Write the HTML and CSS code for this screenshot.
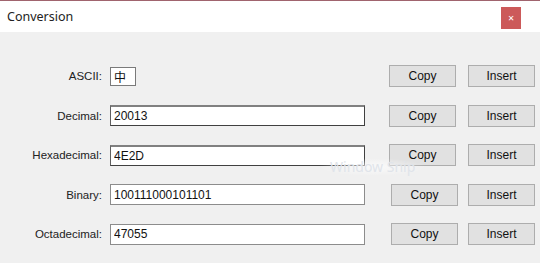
FILE: index.html
```html
<!DOCTYPE html>
<html lang="en">
<head>
  <meta charset="UTF-8" />
  <title>Conversion</title>
  <link rel="stylesheet" href="styles.css">
</head>
<body>
  <div class="window">
    <div class="titlebar">
      <span class="title">Conversion</span>
      <div class="close">&#x2715;</div>
    </div>

    <div class="content">
      <div class="row">
        <label class="label">ASCII:</label>
        <div class="field-cell"><input class="field char" value="中" readonly></div>
        <button class="btn copy">Copy</button>
        <button class="btn">Insert</button>
      </div>
      <div class="row">
        <label class="label">Decimal:</label>
        <div class="field-cell"><input class="field dark" value="20013" readonly></div>
        <button class="btn copy">Copy</button>
        <button class="btn">Insert</button>
      </div>
      <div class="row">
        <label class="label">Hexadecimal:</label>
        <div class="field-cell"><input class="field dark" value="4E2D" readonly></div>
        <button class="btn copy">Copy</button>
        <button class="btn">Insert</button>
      </div>
      <div class="row">
        <label class="label">Binary:</label>
        <div class="field-cell"><input class="field" value="100111000101101" readonly></div>
        <button class="btn copy shifted">Copy</button>
        <button class="btn">Insert</button>
      </div>
      <div class="row">
        <label class="label">Octadecimal:</label>
        <div class="field-cell"><input class="field" value="47055" readonly></div>
        <button class="btn copy shifted">Copy</button>
        <button class="btn">Insert</button>
      </div>
    </div>

    <div class="snip">Window Snip</div>
  </div>
</body>
</html>
```

FILE: styles.css
```css
body {
  margin: 0;
  background-color: #f0f0f0;
  font-family: 'Liberation Sans', Arial, sans-serif;
  color: #1a1a1a;
}

.window {
  position: relative;
  width: 540px;
  height: 263px;
  overflow: hidden;
}

.titlebar {
  display: flex;
  justify-content: space-between;
  align-items: center;
  height: 31px;
  background: #ffffff;
  border-top: 1px solid #a0646e;
  padding: 0 19px 0 7px;
}

.title {
  font-family: 'Noto Sans', sans-serif;
  font-size: 12.5px;
  color: #222;
  margin-top: -1px;
}

.close {
  width: 20px;
  height: 22px;
  background: #cc5a5a;
  color: #fff;
  font-size: 8px;
  font-family: 'DejaVu Sans', sans-serif;
  display: flex;
  align-items: center;
  justify-content: center;
  margin-top: 3px;
}

.content {
  display: flex;
  flex-direction: column;
  gap: 17.5px;
  padding-top: 33px;
}

.row {
  display: flex;
  align-items: center;
  height: 22px;
}

.label {
  width: 102px;
  text-align: right;
  font-size: 11.5px;
  color: #222;
  margin-right: 8px;
}

.field-cell {
  width: 255px;
  display: flex;
  align-items: center;
}

.field {
  box-sizing: border-box;
  width: 255px;
  height: 21px;
  padding: 0 3px;
  border: 1px solid #8c8c8c;
  background: #fff;
  font-family: 'Liberation Sans', Arial, sans-serif;
  font-size: 12px;
  color: #111;
  outline: none;
  margin: 0;
}

.field.dark {
  border-color: #808080 #404040 #404040 #606060;
  border-top-width: 2px;
}

.field.char {
  width: 26px;
  height: 19px;
  padding: 0 3px;
  border-color: #7a7a7a;
  font-family: 'Noto Sans CJK SC', sans-serif;
}

.btn {
  box-sizing: border-box;
  width: 67px;
  height: 22px;
  margin: 0;
  padding: 0;
  background: #e1e1e1;
  border: 1px solid #adadad;
  font-family: 'Liberation Sans', Arial, sans-serif;
  font-size: 12px;
  color: #111;
}

.copy {
  margin-left: 24px;
  margin-right: 12px;
}

.copy.shifted {
  margin-left: 26px;
  margin-right: 10px;
}

.snip {
  position: absolute;
  left: 318px;
  top: 158px;
  padding: 2px 12px;
  font-family: 'Noto Sans', sans-serif;
  font-size: 14px;
  line-height: 14px;
  color: #e0e4ea;
  background: radial-gradient(ellipse at center, #ffffffaa 0%, #ffffff00 70%);
}
```
